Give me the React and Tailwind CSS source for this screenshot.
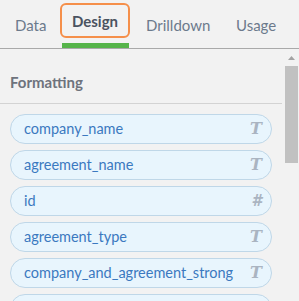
import React from "react";

const fields = [
  { name: "company_name", type: "T" },
  { name: "agreement_name", type: "T" },
  { name: "id", type: "#" },
  { name: "agreement_type", type: "T" },
  { name: "company_and_agreement_strong", type: "T" },
  { name: "", type: "" },
];

export default function App() {
  return (
    <div
      className="w-[299px] h-[301px] overflow-hidden bg-[#f2f2f2] flex flex-col"
      style={{ fontFamily: "Lato, 'Open Sans', sans-serif" }}
    >
      <div className="h-[49px] shrink-0 flex items-start border-b border-[#a9a9a9] relative">
        <div className="w-[59px] h-[48px] flex items-center pl-[15px] pt-[2px] text-[15px] text-[#6c7a8c]">Data</div>
        <div className="w-[72px] h-[48px] flex flex-col items-center relative">
          <div className="mt-[3px] w-[70px] h-[35px] rounded-[6px] border-2 border-[#f58f4a] flex items-center justify-center pt-[2px] text-[15px] font-bold text-[#4b5361]">
            Design
          </div>
          <div className="absolute left-[3px] bottom-0 w-[67px] h-[5px] bg-[#56b44a]" />
        </div>
        <div className="w-[105px] h-[48px] flex items-center pl-[15px] pt-[2px] text-[15px] text-[#6c7a8c]">Drilldown</div>
        <div className="h-[48px] flex items-center pt-[2px] text-[15px] text-[#6c7a8c]">Usage</div>
      </div>
      <div className="flex flex-1 min-h-0">
        <div className="w-[284px] flex flex-col">
          <div className="h-[55px] shrink-0 border-b border-[#d3d3d3] flex items-center pl-[10px] pt-[13px] text-[15px] font-bold text-[#6e737d] mr-[2px]">
            Formatting
          </div>
          <div className="flex flex-col gap-[6px] pt-[10px] pl-[10px] pr-[12px]">
            {fields.map((f, i) => (
              <div
                key={i}
                className="h-[30px] shrink-0 rounded-full border border-[#bfd7e8] bg-[#e8f5fd] flex items-center justify-between pl-[13px] pr-[9px]"
              >
                <span className="text-[14.5px] text-[#3b79c0]">{f.name}</span>
                {f.type === "T" ? (
                  <span
                    className="text-[16px] italic font-bold text-[#aab4c1]"
                    style={{ fontFamily: "'DejaVu Serif', serif" }}
                  >
                    T
                  </span>
                ) : f.type === "#" ? (
                  <span
                    className="text-[15px] italic font-bold text-[#aab4c1]"
                    style={{ fontFamily: "'DejaVu Sans', sans-serif" }}
                  >
                    #
                  </span>
                ) : null}
              </div>
            ))}
          </div>
        </div>
        <div className="w-[15px] flex flex-col items-center pt-[7px]">
          <svg width="7" height="4" viewBox="0 0 7 4" className="ml-[-1px]">
            <polygon points="3.5,0 7,4 0,4" fill="#a3a3a3" />
          </svg>
          <div className="mt-[6px] w-[13px] h-[97px] bg-[#c1c1c1]" />
        </div>
      </div>
    </div>
  );
}
